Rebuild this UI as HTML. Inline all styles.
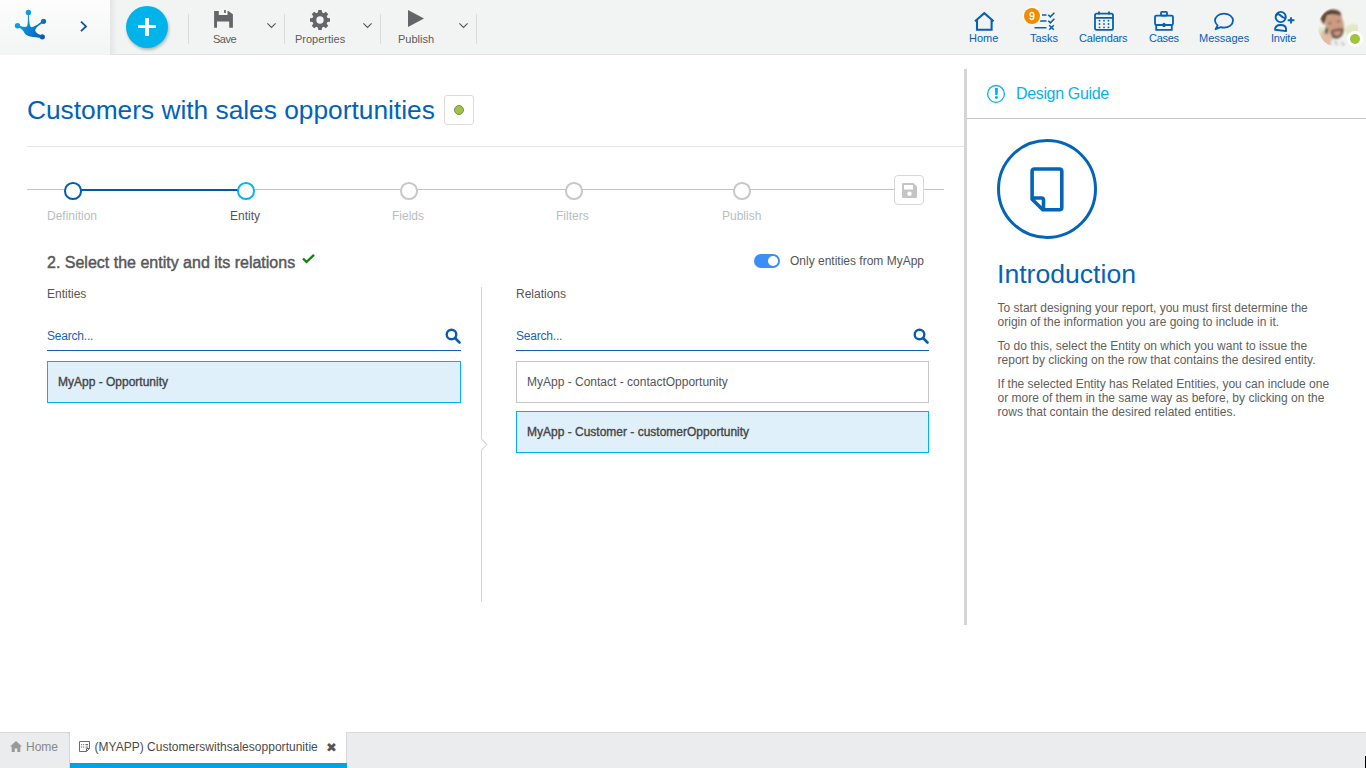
<!DOCTYPE html>
<html><head><meta charset="utf-8">
<style>
*{box-sizing:border-box;margin:0;padding:0}
html,body{width:1366px;height:768px;overflow:hidden;background:#fff;font-family:"Liberation Sans",sans-serif;position:relative}
.a{position:absolute;white-space:nowrap;line-height:normal}
svg{position:absolute;overflow:visible}
#hdr{position:absolute;left:0;top:0;width:1366px;height:55px;background:#f2f3f3;border-bottom:1px solid #dde1e8}
#logoarea{position:absolute;left:0;top:0;width:110px;height:55px;background:linear-gradient(#fdfdfd,#f3f4f4)}
.sep{position:absolute;top:14px;width:1px;height:30px;background:#dcdcdc}
.tl{font-size:11px;color:#5c5c5c}
.nl{font-size:11px;color:#0461b8}
.step{font-size:12px;color:#b9bcc2}
</style></head><body>
<div id="hdr"></div>
<div id="logoarea"></div><div class="a" style="left:110px;top:0;width:7px;height:54px;background:linear-gradient(90deg,#e4e5e5,#f2f3f3)"></div>

<!-- logo -->
<svg style="left:0;top:0" width="110" height="54" viewBox="0 0 110 54">
 <defs><linearGradient id="lg" gradientUnits="userSpaceOnUse" x1="15" y1="18" x2="45" y2="38"><stop offset="0" stop-color="#0ab0ec"/><stop offset="0.5" stop-color="#0a82d2"/><stop offset="1" stop-color="#0a55b0"/></linearGradient></defs>
 <g fill="url(#lg)">
  <circle cx="28.4" cy="12.5" r="2.7"/>
  <circle cx="17.5" cy="25.7" r="2.7"/>
  <circle cx="43.5" cy="21.3" r="2.6"/>
  <circle cx="42.3" cy="36.8" r="2.6"/>
  <path d="M17.4 24.5 C21 26.5 24.5 27.8 26.8 26.6 C27.9 25.2 28 20 27.9 14 L29 14 C29 20 29.2 25.2 31.2 27.2 C34.5 26.8 39 23.5 43 20.4 L44 22.3 C40 24.5 36.4 26.6 35.3 29.8 C35 32.8 38.5 34.5 42 35.5 L42.6 38 C38 37.8 33.5 37.2 30.3 36.6 C26.8 36 24.6 34 23.6 31.6 C22.4 29.2 20 27.8 17.4 26.9 Z"/>
 </g>
 <path d="M81 21.6 L86 26.4 L81 31.2" fill="none" stroke="#0b4fa8" stroke-width="1.8"/>
</svg>

<!-- plus button -->
<div class="a" style="left:126px;top:6px;width:42px;height:42px;border-radius:50%;background:#00b4eb;box-shadow:1px 2px 3px rgba(0,0,0,0.25)"></div>
<div class="a" style="left:138px;top:25px;width:18px;height:3.4px;background:#fff"></div>
<div class="a" style="left:145px;top:18px;width:4px;height:18px;background:#fff"></div>

<div class="sep" style="left:188px"></div>
<div class="sep" style="left:284px"></div>
<div class="sep" style="left:380px"></div>
<div class="sep" style="left:476px"></div>

<!-- save icon -->
<svg style="left:214px;top:10px" width="19" height="18" viewBox="0 0 19 18">
 <path d="M0.1 1.1 H4.8 V5 H13.5 V1.1 H14.3 L18.9 4.3 V17.7 H15.2 V11.6 H3 V17.7 H0.1 Z M10.1 0.1 H11.8 V3.1 H10.1 Z" fill="#656569"/>
</svg>
<div class="a tl" style="left:213px;top:33px;letter-spacing:-0.5px">Save</div>
<svg style="left:267px;top:22.5px" width="9" height="5" viewBox="0 0 9 5"><path d="M0.4 0.4 L4.5 4.4 L8.6 0.4" fill="none" stroke="#555" stroke-width="1.1"/></svg>

<!-- gear -->
<svg style="left:310px;top:10px" width="20" height="20" viewBox="0 0 20 20">
 <path fill="#656569" fill-rule="evenodd" d="M7.90 2.60 L8.30 -0.00 L11.70 0.00 L12.10 2.60 A7.4 7.4 0 0 1 13.75 3.28 L15.87 1.73 L18.27 4.13 L16.72 6.25 A7.4 7.4 0 0 1 17.40 7.90 L20.00 8.30 L20.00 11.70 L17.40 12.10 A7.4 7.4 0 0 1 16.72 13.75 L18.27 15.87 L15.87 18.27 L13.75 16.72 A7.4 7.4 0 0 1 12.10 17.40 L11.70 20.00 L8.30 20.00 L7.90 17.40 A7.4 7.4 0 0 1 6.25 16.72 L4.13 18.27 L1.73 15.87 L3.28 13.75 A7.4 7.4 0 0 1 2.60 12.10 L0.00 11.70 L-0.00 8.30 L2.60 7.90 A7.4 7.4 0 0 1 3.28 6.25 L1.73 4.13 L4.13 1.73 L6.25 3.28 A7.4 7.4 0 0 1 7.90 2.60 Z M10 6.3 A3.7 3.7 0 1 0 10 13.7 A3.7 3.7 0 1 0 10 6.3 Z"/>
</svg>
<div class="a tl" style="left:295px;top:33px">Properties</div>
<svg style="left:363px;top:22.5px" width="9" height="5" viewBox="0 0 9 5"><path d="M0.4 0.4 L4.5 4.4 L8.6 0.4" fill="none" stroke="#555" stroke-width="1.1"/></svg>

<!-- play -->
<svg style="left:408px;top:10px" width="17" height="18" viewBox="0 0 17 18"><path d="M0 0 L16 8.5 L0 17 Z" fill="#656569"/></svg>
<div class="a tl" style="left:398px;top:33px">Publish</div>
<svg style="left:459px;top:22.5px" width="9" height="5" viewBox="0 0 9 5"><path d="M0.4 0.4 L4.5 4.4 L8.6 0.4" fill="none" stroke="#555" stroke-width="1.1"/></svg>

<!-- right nav -->
<svg style="left:974px;top:11px" width="20" height="20" viewBox="0 0 20 20"><path d="M1 10.2 L10.3 2.2 L19.6 10.2 M3 8.6 V18.7 H17.6 V8.6" fill="none" stroke="#0461b8" stroke-width="2.1" stroke-linejoin="miter"/></svg>
<div class="a nl" style="left:969px;top:32px">Home</div>

<svg style="left:1034px;top:12px" width="22" height="19" viewBox="0 0 22 19">
 <g stroke="#0461b8" stroke-width="1.6" fill="none">
 <path d="M8 3 H12.5 M6 9 H12.5 M0.5 15.7 H12.5"/>
 <path d="M14.3 2.8 L16.3 4.8 L20.4 0.8 M14.3 8.8 L16.3 10.8 L20.4 6.8 M15.2 13.3 L19.8 17.8 M19.8 13.3 L15.2 17.8"/>
 </g>
</svg>
<div class="a" style="left:1022.5px;top:6.1px;width:19px;height:19px;border-radius:50%;background:#fbfbfb"></div>
<div class="a" style="left:1024px;top:7.6px;width:16px;height:16px;border-radius:50%;background:#f08c00;color:#fff;font-size:10px;-webkit-text-stroke:0.3px #fff;text-align:center;line-height:17px">9</div>
<div class="a nl" style="left:1030px;top:32px">Tasks</div>

<svg style="left:1094px;top:11px" width="20" height="20" viewBox="0 0 20 20">
 <g fill="none" stroke="#0461b8" stroke-width="1.8"><rect x="1" y="2.6" width="18" height="16.3" rx="1.6"/><path d="M1 6.8 H19 M5 0.6 V3.6 M15 0.6 V3.6"/></g>
 <g fill="#0461b8"><circle cx="5.5" cy="9.7" r="0.9"/><circle cx="10" cy="9.7" r="0.9"/><circle cx="14.5" cy="9.7" r="0.9"/><circle cx="5.5" cy="13" r="0.9"/><circle cx="10" cy="13" r="0.9"/><circle cx="14.5" cy="13" r="0.9"/><circle cx="5.5" cy="16.3" r="0.9"/><circle cx="10" cy="16.3" r="0.9"/><circle cx="14.5" cy="16.3" r="0.9"/></g>
</svg>
<div class="a nl" style="left:1079px;top:32px;letter-spacing:-0.2px">Calendars</div>

<svg style="left:1154px;top:11px" width="20" height="20" viewBox="0 0 20 20">
 <g fill="none" stroke="#0461b8" stroke-width="1.8"><rect x="1" y="4.6" width="18" height="9.4" rx="1.4"/><path d="M2.2 14 V18.8 H17.8 V14"/><rect x="7" y="0.9" width="6" height="3.7" rx="0.9"/></g>
 <ellipse cx="10" cy="14" rx="1.7" ry="2.3" fill="#0461b8"/>
</svg>
<div class="a nl" style="left:1149px;top:32px;letter-spacing:-0.3px">Cases</div>

<svg style="left:1214px;top:12px" width="20" height="18" viewBox="0 0 20 18">
 <path d="M10 1.6 C15 1.6 19 4.6 19 8.6 C19 12.6 15 15.6 10 15.6 C8.8 15.6 7.6 15.4 6.6 15.1 L1.6 17.2 L3.6 13.4 C2 12.1 1 10.5 1 8.6 C1 4.6 5 1.6 10 1.6 Z" fill="none" stroke="#0461b8" stroke-width="1.8" stroke-linejoin="round"/>
</svg>
<div class="a nl" style="left:1199px;top:32px">Messages</div>

<svg style="left:1274px;top:11px" width="21" height="21" viewBox="0 0 21 21">
 <g fill="none" stroke="#0461b8" stroke-width="1.9"><circle cx="6.7" cy="6" r="5.1"/><path d="M1.8 5 C3.2 2.8 5 3 6.5 4.5 C8 6 9.6 7 11.8 7.2"/><path d="M1.1 18.7 C1.1 15.6 3.4 14 6.5 14 C9.8 14 12.1 15.6 12.1 18.4 V20.1 Z" stroke-linejoin="round"/><path d="M17 6.2 V12.6 M13.7 9.3 H20.4"/></g>
 <path d="M2 5 A5.1 5.1 0 0 1 4.5 1.5 C5.5 2.5 6 3.5 6.5 4.5 C5 3 3.2 3 2 5 Z" fill="#0461b8"/>
</svg>
<div class="a nl" style="left:1271px;top:32px;letter-spacing:-0.2px">Invite</div>

<!-- avatar -->
<svg style="left:1318px;top:7px" width="40" height="40" viewBox="0 0 40 40">
 <defs><clipPath id="avc"><circle cx="20" cy="20" r="20"/></clipPath><filter id="avb" x="-20%" y="-20%" width="140%" height="140%"><feGaussianBlur stdDeviation="0.9"/></filter></defs>
 <g clip-path="url(#avc)">
  <rect width="40" height="40" fill="#f3f4f0"/>
  <g filter="url(#avb)">
   <ellipse cx="35" cy="23" rx="8" ry="6" fill="#dfe9c2"/>
   <ellipse cx="3" cy="28" rx="4" ry="8" fill="#d9e6c0"/>
   <path d="M2.5 12 Q5 4.5 13 2.6 Q19.5 2.2 22.5 5.5 L23.5 10 Q17 6 9 8.5 L6 18 Z" fill="#5e4030"/>
   <path d="M8.5 9.5 Q15 6.5 23 9 Q26.5 16 26 23 Q24 31 18 32 Q11 31 8 24 Q6.5 16 8.5 9.5 Z" fill="#cc9c82"/>
   <path d="M10.5 16.5 Q12 15.5 13.5 16.3 M18.8 14.8 Q20.5 13.8 22 14.6" stroke="#5a3e30" stroke-width="1.1" fill="none"/>
   <path d="M13 23.5 Q19 20.5 25.8 21.5 Q26 29 20 32 Q14 32.5 12 27 Z" fill="#7a5a48"/>
   <path d="M15 25.3 Q19.5 23.3 23.5 24.3 Q22 28.5 19 29 Q16 28.5 15 25.3 Z" fill="#c49a86"/>
   <path d="M3.5 25 Q8 20 12 25 Q15 30 14.5 38 L7 41 Q2 35 3.5 25 Z" fill="#e0bba6"/>
   <rect x="7" y="21" width="3" height="6" rx="1" fill="#4a5a4a"/>
   <path d="M13.5 33 Q21 31 29 33 L31 42 L12 42 Z" fill="#efefef"/>
   <path d="M17 34 L19 38 M24 35 L26 39" stroke="#777" stroke-width="0.8"/>
  </g>
 </g>
</svg>
<div class="a" style="left:1347px;top:31px;width:16px;height:16px;border-radius:50%;background:#fff"></div>
<div class="a" style="left:1350px;top:34px;width:10px;height:10px;border-radius:50%;background:#a0c43a"></div>

<!-- title -->
<div class="a" style="left:27px;top:95.2px;font-size:26.3px;color:#0062bc">Customers with sales opportunities</div>
<div class="a" style="left:444px;top:95px;width:30px;height:30px;border:1px solid #dcdcdc;border-radius:3px"></div>
<div class="a" style="left:454px;top:105px;width:10px;height:10px;border-radius:50%;background:#a2c43a;border:1px solid #7a8870"></div>
<div class="a" style="left:27px;top:146px;width:937px;height:1px;background:#e4e5ea"></div>

<!-- stepper -->
<div class="a" style="left:27px;top:189px;width:917px;height:1.2px;background:#c4c4c4"></div>
<div class="a" style="left:73px;top:188.8px;width:173px;height:2.2px;background:#0058ac"></div>
<div class="a" style="left:64px;top:182px;width:17.5px;height:17.5px;border-radius:50%;border:2px solid #0060b0;background:#fff"></div>
<div class="a" style="left:237px;top:182px;width:17.5px;height:17.5px;border-radius:50%;border:2px solid #0ab4ec;background:#fff"></div>
<div class="a" style="left:400px;top:182px;width:17.5px;height:17.5px;border-radius:50%;border:2px solid #c8c8c8;background:#fff"></div>
<div class="a" style="left:565px;top:182px;width:17.5px;height:17.5px;border-radius:50%;border:2px solid #c8c8c8;background:#fff"></div>
<div class="a" style="left:733px;top:182px;width:17.5px;height:17.5px;border-radius:50%;border:2px solid #c8c8c8;background:#fff"></div>
<div class="a step" style="left:47px;top:209px">Definition</div>
<div class="a step" style="left:230px;top:209px;color:#555">Entity</div>
<div class="a step" style="left:392px;top:209px">Fields</div>
<div class="a step" style="left:556px;top:209px">Filters</div>
<div class="a step" style="left:722px;top:209px">Publish</div>
<div class="a" style="left:894px;top:175px;width:30px;height:30px;border:1.5px solid #d6d7db;border-radius:4px;background:#fff"></div>
<svg style="left:902px;top:183px" width="15" height="15" viewBox="0 0 15 15">
 <path fill="#c4c5c9" fill-rule="evenodd" d="M1 0 H11.5 L15 3.5 V14 A1 1 0 0 1 14 15 H1 A1 1 0 0 1 0 14 V1 A1 1 0 0 1 1 0 Z M2 2 V6.5 H11 V2 Z M7.5 8.5 A2.2 2.2 0 1 0 7.5 12.9 A2.2 2.2 0 1 0 7.5 8.5 Z"/>
</svg>

<!-- heading -->
<div class="a" style="left:47px;top:253.5px;font-size:16px;color:#58585a;-webkit-text-stroke:0.45px #58585a">2. Select the entity and its relations</div>
<svg style="left:302px;top:254px" width="13" height="9" viewBox="0 0 13 9"><path d="M1 4.5 L4.5 8 L12 0.8" fill="none" stroke="#0b840b" stroke-width="2.3"/></svg>

<!-- toggle -->
<div class="a" style="left:754px;top:254px;width:26px;height:14px;border-radius:7px;background:#3a8ef6"></div>
<div class="a" style="left:767.5px;top:256px;width:10px;height:10px;border-radius:50%;background:#fff"></div>
<div class="a" style="left:790px;top:254px;font-size:12px;color:#555">Only entities from MyApp</div>

<div class="a" style="left:47px;top:286.8px;font-size:12px;color:#555">Entities</div>
<div class="a" style="left:516px;top:286.8px;font-size:12px;color:#555">Relations</div>

<!-- divider -->
<div class="a" style="left:481px;top:287px;width:1px;height:152px;background:#d6d6d6"></div><div class="a" style="left:481px;top:450px;width:1px;height:152px;background:#d6d6d6"></div><svg style="left:478px;top:436px" width="12" height="18" viewBox="0 0 12 18"><path d="M3.5 3 L8.8 8.6 L3.5 14.2" fill="none" stroke="#d6d6d6" stroke-width="1.1"/></svg>

<!-- search boxes -->
<div class="a" style="left:47px;top:328.8px;font-size:12px;color:#1a63b4;letter-spacing:-0.2px">Search...</div>
<div class="a" style="left:47px;top:349.6px;width:414px;height:1.6px;background:#1060b0"></div>
<svg style="left:445px;top:328px" width="16" height="16" viewBox="0 0 16 16"><circle cx="6.5" cy="6.5" r="4.8" fill="none" stroke="#0b5cad" stroke-width="2.4"/><path d="M10 10 L14.5 14.5" stroke="#0b5cad" stroke-width="2.6" stroke-linecap="round"/></svg>

<div class="a" style="left:516px;top:328.8px;font-size:12px;color:#1a63b4;letter-spacing:-0.2px">Search...</div>
<div class="a" style="left:516px;top:349.6px;width:413px;height:1.6px;background:#1060b0"></div>
<svg style="left:913px;top:328px" width="16" height="16" viewBox="0 0 16 16"><circle cx="6.5" cy="6.5" r="4.8" fill="none" stroke="#0b5cad" stroke-width="2.4"/><path d="M10 10 L14.5 14.5" stroke="#0b5cad" stroke-width="2.6" stroke-linecap="round"/></svg>

<!-- items -->
<div class="a" style="left:47px;top:361px;width:414px;height:42px;border:1px solid #00b3ef;background:#dff0fa"></div>
<div class="a" style="left:58px;top:375px;font-size:12px;color:#454545;-webkit-text-stroke:0.35px #454545">MyApp - Opportunity</div>
<div class="a" style="left:516px;top:361px;width:413px;height:42px;border:1px solid #c6c7ca;background:#fff"></div>
<div class="a" style="left:527px;top:375px;font-size:12px;color:#555">MyApp - Contact - contactOpportunity</div>
<div class="a" style="left:516px;top:411px;width:413px;height:42px;border:1px solid #00b3ef;background:#dff0fa"></div>
<div class="a" style="left:527px;top:425px;font-size:12px;color:#454545;-webkit-text-stroke:0.35px #454545">MyApp - Customer - customerOpportunity</div>

<!-- right panel -->
<div class="a" style="left:964px;top:69px;width:3px;height:556px;background:#d5d5d9"></div>
<div class="a" style="left:967px;top:118px;width:399px;height:1px;background:#c8c8cc"></div>
<svg style="left:987px;top:85px" width="18" height="18" viewBox="0 0 18 18"><circle cx="9" cy="8.9" r="8.4" fill="none" stroke="#04b2ec" stroke-width="1.3"/><path d="M7.9 2.9 H10.9 L10.6 10.1 H8.2 Z" fill="#04b2ec"/><circle cx="9.4" cy="12.5" r="1.45" fill="#04b2ec"/></svg>
<div class="a" style="left:1016px;top:85.3px;font-size:16px;color:#04b2ec;letter-spacing:-0.35px">Design Guide</div>

<div class="a" style="left:997px;top:139px;width:100px;height:100px;border-radius:50%;border:3px solid #0464b8"></div>
<svg style="left:1030px;top:167px" width="35" height="45" viewBox="0 0 35 45"><path d="M4.3 2 H29.6 A2.2 2.2 0 0 1 31.8 4.2 V40.5 A2.2 2.2 0 0 1 29.6 42.7 H12.8 L2.1 32.3 V4.2 A2.2 2.2 0 0 1 4.3 2 Z M2.1 31 H11.5 A2 2 0 0 1 13.5 33 V42.7" fill="none" stroke="#0464b8" stroke-width="3.6" stroke-linejoin="round"/></svg>
<div class="a" style="left:997px;top:258.8px;font-size:26.6px;color:#0464b8">Introduction</div>
<div class="a" style="left:997.6px;top:300.7px;font-size:12px;color:#606060;line-height:14px;white-space:normal;width:340px">
<p style="margin-bottom:10px">To start designing your report, you must first determine the<br>origin of the information you are going to include in it.</p>
<p style="margin-bottom:10px">To do this, select the Entity on which you want to issue the<br>report by clicking on the row that contains the desired entity.</p>
<p>If the selected Entity has Related Entities, you can include one<br>or more of them in the same way as before, by clicking on the<br>rows that contain the desired related entities.</p>
</div>

<!-- bottom tabs -->
<div class="a" style="left:0;top:732px;width:1366px;height:36px;background:#ebecee;border-top:1px solid #d6d7d9"></div>
<div class="a" style="left:0;top:732px;width:70px;height:36px;border-top:1px solid #d6d7d9;border-right:1px solid #d6d7d9;border-top-right-radius:3px"></div><div class="a" style="left:70px;top:732px;width:277px;height:36px;background:#fff;border-right:1px solid #d6d7d9"></div>
<div class="a" style="left:70px;top:763px;width:277px;height:5px;background:#00a4e4"></div>
<svg style="left:10px;top:741px" width="12" height="11" viewBox="0 0 12 11"><path d="M6 0 L12 5.5 H10.3 V11 H7.3 V7.5 H4.7 V11 H1.7 V5.5 H0 Z" fill="#999"/></svg>
<div class="a" style="left:26px;top:740px;font-size:12px;color:#888">Home</div>
<svg style="left:79px;top:741px" width="11" height="11" viewBox="0 0 11 11"><g fill="none" stroke="#6a6a70" stroke-width="1"><path d="M0.5 0.5 H10.5 V7.5 L7.5 10.5 H0.5 Z M10.5 7.5 H7.5 V10.5"/></g><g fill="#6a6a70"><rect x="2" y="3.2" width="1.2" height="1"/><rect x="4" y="3.2" width="1.2" height="1"/><rect x="6.5" y="3" width="2.5" height="1.3"/><rect x="2" y="5.6" width="1.2" height="1"/><rect x="4" y="5.6" width="1.2" height="1"/><rect x="6.5" y="5.6" width="2.5" height="1"/></g></svg>
<div class="a" style="left:94.5px;top:740px;font-size:12px;color:#4a4a4a;letter-spacing:0.02px">(MYAPP) Customerswithsalesopportunitie</div>
<div class="a" style="left:326px;top:740.2px;font-size:13px;color:#555">✖</div>
<div class="a" style="left:1365px;top:756px;width:1px;height:12px;background:#000"></div>
</body></html>
